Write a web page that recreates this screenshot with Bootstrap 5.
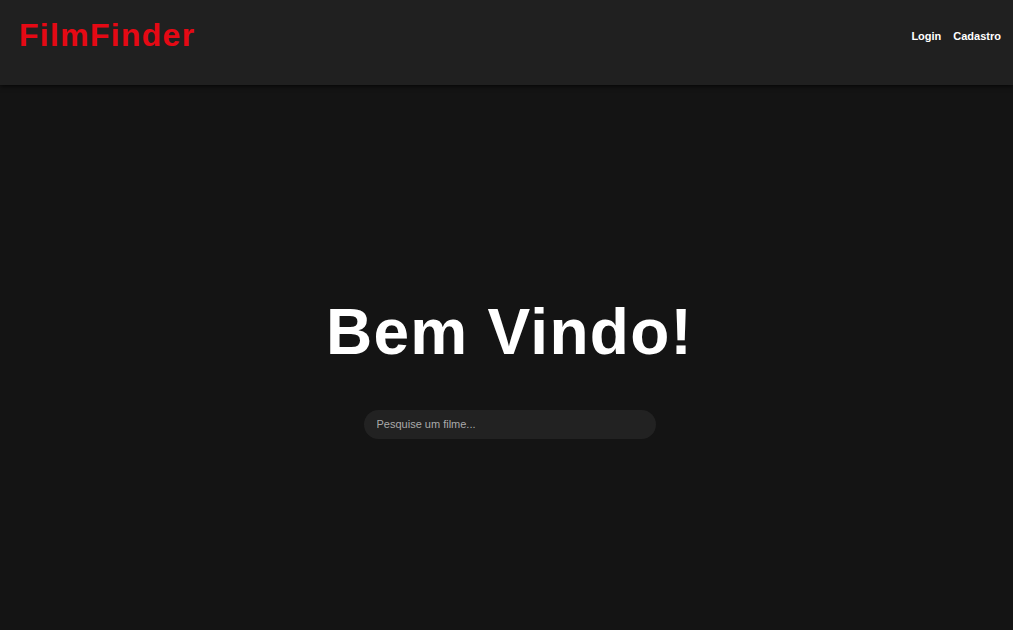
<!DOCTYPE html>
<html lang="pt-BR">
<head>
<meta charset="utf-8">
<meta name="viewport" content="width=device-width, initial-scale=1">
<title>FilmFinder</title>
<link href="https://cdn.jsdelivr.net/npm/bootstrap@5.3.0/dist/css/bootstrap.min.css" rel="stylesheet">
<style>
body { background: #141414; color: #fff; font-family: "Liberation Sans", Arial, sans-serif; }
.site-header { background: #202020; box-shadow: 0 1px 5px rgba(0,0,0,.8); padding: 17px 12px 31px 19px; }
.site-brand { color: #e50914; font-size: 32px; line-height: 37px; letter-spacing: .04em; }
.site-nav { gap: 12px; }
.site-link { color: #fff; font-size: 11px; line-height: 16px; }
.site-link:hover { color: #e50914; }
.hero { padding: 19px 0 0 6px; }
.hero-title { font-size: 64px; line-height: 74px; letter-spacing: .02em; margin-bottom: 41px; }
.search-form { width: 292px; }
.search-box, .search-box:focus { background: #222; color: #fff; font-size: 11px; line-height: 17px; padding: 6px 13px; }
.search-box::placeholder { color: #aaa; }
</style>
</head>
<body class="d-flex flex-column min-vh-100">
<header class="site-header d-flex justify-content-between align-items-center position-relative">
  <a class="site-brand fw-bold text-decoration-none" href="#">FilmFinder</a>
  <nav class="site-nav d-flex" aria-label="Conta">
    <a class="site-link fw-bold text-decoration-none" href="#">Login</a>
    <a class="site-link fw-bold text-decoration-none" href="#">Cadastro</a>
  </nav>
</header>
<main class="hero flex-grow-1 d-flex flex-column align-items-center justify-content-center">
  <h1 class="hero-title fw-bold text-center">Bem Vindo!</h1>
  <form class="search-form mw-100" role="search">
    <input class="search-box form-control border-0 rounded-pill" type="search" aria-label="Pesquise um filme" placeholder="Pesquise um filme...">
  </form>
</main>
<script src="https://cdn.jsdelivr.net/npm/bootstrap@5.3.0/dist/js/bootstrap.bundle.min.js"></script>
</body>
</html>
